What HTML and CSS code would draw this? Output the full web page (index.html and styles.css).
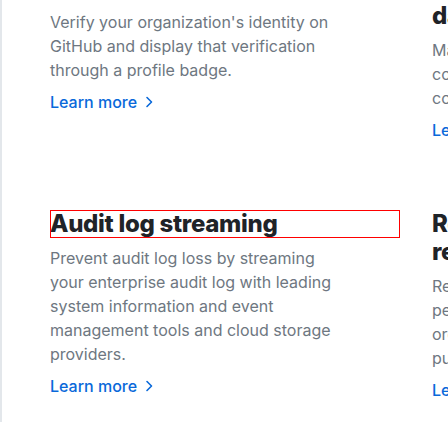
FILE: index.html
```html
<!DOCTYPE html>
<html>
<head>
<meta charset="utf-8">
<link rel="stylesheet" href="styles.css">
</head>
<body>
<div class="frame">
  <div class="grid">
    <div class="item">
      <h3 class="title">Verified domains</h3>
      <p class="desc">Verify your organization's identity on GitHub and display that verification through a profile badge.</p>
      <a class="more" href="#">Learn more <svg class="chev" width="8" height="12" viewBox="0 0 8 12"><path d="M2 1.5l4.5 4.5-4.5 4.5" fill="none" stroke="currentColor" stroke-width="1.6" stroke-linecap="round" stroke-linejoin="round"/></svg></a>
    </div>
    <div class="item">
      <h3 class="title">Enterprise owner dashboard</h3>
      <p class="desc">Manage users, organizations, and compliance settings from one central console for the entire enterprise.</p>
      <a class="more" href="#">Learn more <svg class="chev" width="8" height="12" viewBox="0 0 8 12"><path d="M2 1.5l4.5 4.5-4.5 4.5" fill="none" stroke="currentColor" stroke-width="1.6" stroke-linecap="round" stroke-linejoin="round"/></svg></a>
    </div>
    <div class="item">
      <h3 class="title outlined">Audit log streaming</h3>
      <p class="desc">Prevent audit log loss by streaming your enterprise audit log with leading system information and event management tools and cloud storage providers.</p>
      <a class="more" href="#">Learn more <svg class="chev" width="8" height="12" viewBox="0 0 8 12"><path d="M2 1.5l4.5 4.5-4.5 4.5" fill="none" stroke="currentColor" stroke-width="1.6" stroke-linecap="round" stroke-linejoin="round"/></svg></a>
    </div>
    <div class="item">
      <h3 class="title">Repository rules and restrictions</h3>
      <p class="desc">Restrict repository visibility and personal forks and deletion within your organization to prevent any accidental public exposure of private code.</p>
      <a class="more" href="#">Learn more <svg class="chev" width="8" height="12" viewBox="0 0 8 12"><path d="M2 1.5l4.5 4.5-4.5 4.5" fill="none" stroke="currentColor" stroke-width="1.6" stroke-linecap="round" stroke-linejoin="round"/></svg></a>
    </div>
  </div>
</div>
</body>
</html>
```
FILE: styles.css
```css
html, body {
  margin: 0;
  padding: 0;
  background: #ffffff;
  overflow: clip;
}
body {
  width: 448px;
  height: 448px;
  font-family: "Inter", "Noto Sans", sans-serif;
}
.frame {
  height: 448px;
  border-left: 2px solid #e3e7eb;
  padding-left: 48px;
  overflow: clip;
}
.grid {
  display: grid;
  grid-template-columns: 350px 350px;
  width: 732px;
  column-gap: 32px;
  row-gap: 68px;
  margin-top: -26px;
}
.item {
  display: flex;
  flex-direction: column;
  align-items: flex-start;
}
.title {
  margin: 0 0 8px 0;
  font-size: 24px;
  line-height: 28px;
  font-weight: 800;
  color: #1f2328;
  letter-spacing: -0.3px;
  align-self: stretch;
  max-width: 300px;
}
.outlined {
  max-width: none;
  box-shadow: inset 0 0 0 1px #ff0000;
}
.desc {
  margin: 0;
  max-width: 296px;
  font-size: 16px;
  line-height: 24px;
  color: #6e7781;
}
.more {
  margin-top: 8px;
  font-size: 16px;
  line-height: 24px;
  font-weight: 500;
  color: #0969da;
  text-decoration: none;
  display: inline-flex;
  align-items: center;
  gap: 8px;
}
.chev {
  display: block;
}
```
